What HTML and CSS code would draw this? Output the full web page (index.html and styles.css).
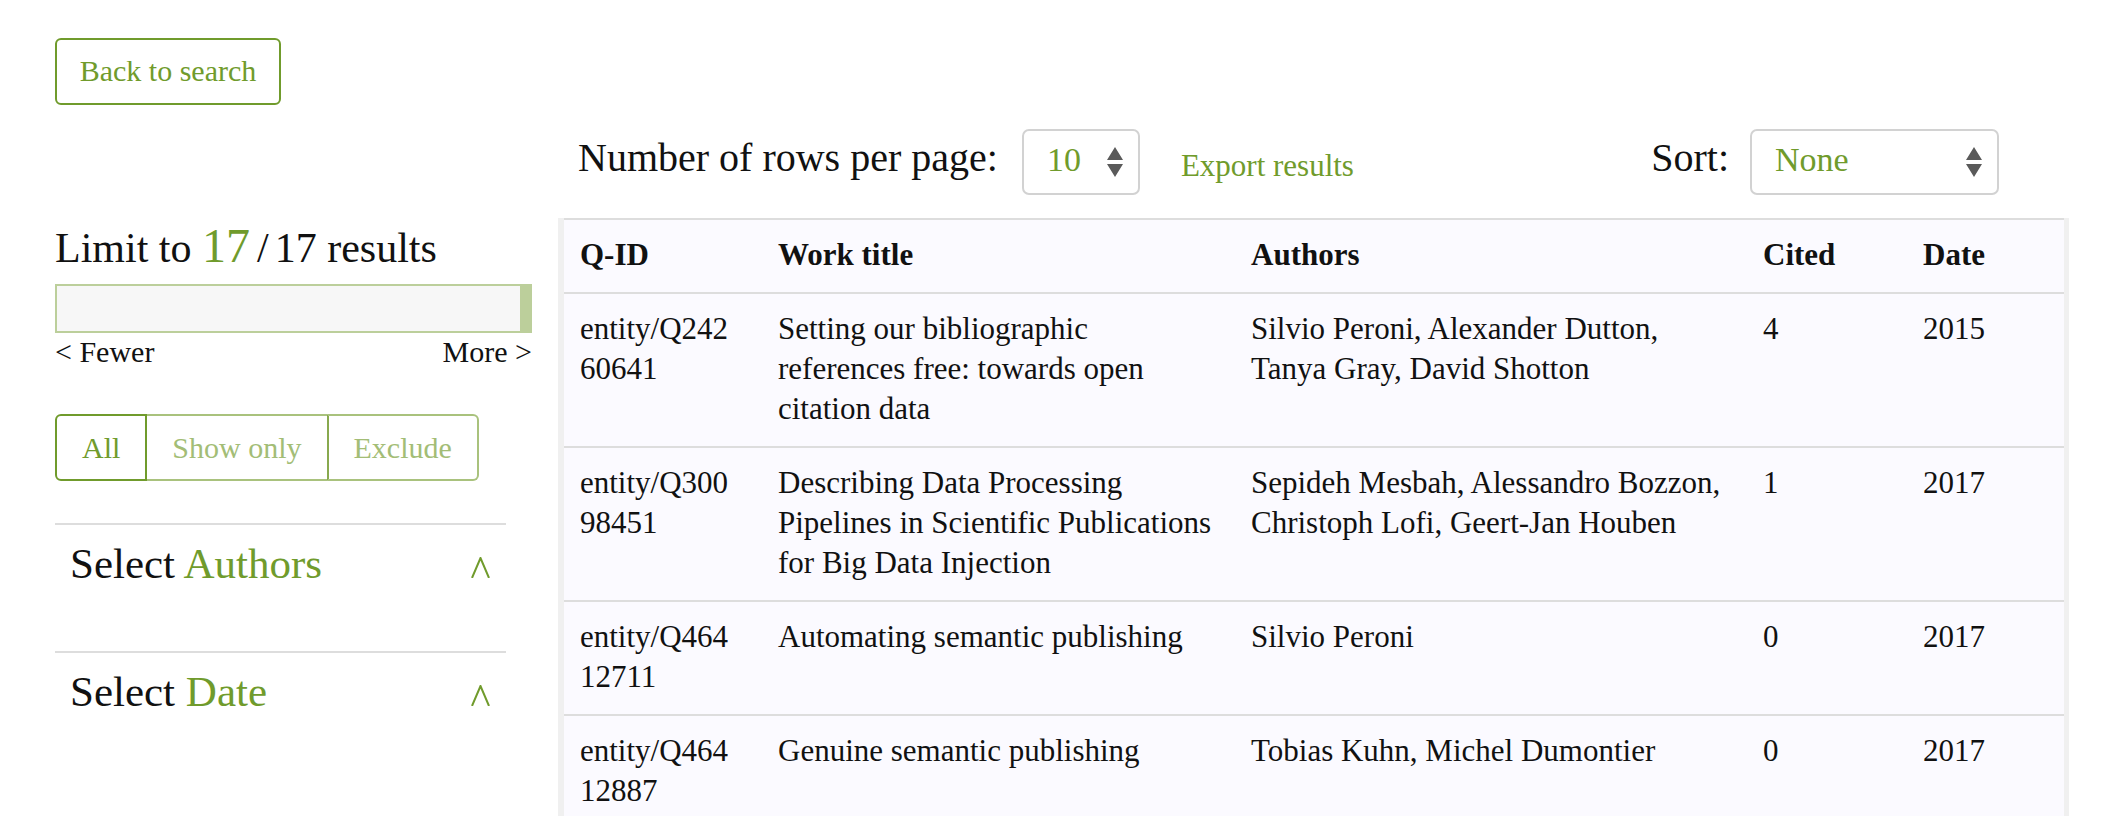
FILE: index.html
```html
<!DOCTYPE html>
<html lang="en">
<head>
<meta charset="utf-8">
<title>Results</title>
<link rel="stylesheet" href="styles.css">
</head>
<body>
<div class="page">
  <a class="back-btn" href="#">Back to search</a>
  <div class="main">
    <aside class="sidebar">
      <div class="limit">Limit to <span class="limit-num">17</span><span class="slash">/</span>17 results</div>
      <div class="slider"><div class="slider-handle"></div></div>
      <div class="slider-labels"><span>&lt; Fewer</span><span>More &gt;</span></div>
      <div class="toggle">
        <span class="seg seg-active">All</span><span class="seg seg-mid">Show only</span><span class="seg seg-last">Exclude</span>
      </div>
      <div class="facet facet-first">
        <h3 class="facet-title">Select <span class="green">Authors</span></h3>
        <svg class="chev" width="19" height="21" viewBox="0 0 19 21"><polyline points="1,21 9.5,1 18,21" fill="none" stroke="#709b2c" stroke-width="2"/></svg>
      </div>
      <div class="facet">
        <h3 class="facet-title">Select <span class="green">Date</span></h3>
        <svg class="chev" width="19" height="21" viewBox="0 0 19 21"><polyline points="1,21 9.5,1 18,21" fill="none" stroke="#709b2c" stroke-width="2"/></svg>
      </div>
    </aside>
    <section class="results">
      <div class="controls">
        <span class="ctl-label rows-label">Number of rows per page:</span>
        <div class="select select-rows">
          <span class="select-value">10</span>
          <svg width="16" height="30" viewBox="0 0 16 30"><path d="M8 0 L16 13 L0 13 Z M0 17 L16 17 L8 30 Z" fill="#5a5a5a"/></svg>
        </div>
        <a class="export" href="#">Export results</a>
        <div class="sort">
          <span class="ctl-label">Sort:</span>
          <div class="select select-sort">
            <span class="select-value">None</span>
            <svg width="16" height="30" viewBox="0 0 16 30"><path d="M8 0 L16 13 L0 13 Z M0 17 L16 17 L8 30 Z" fill="#5a5a5a"/></svg>
          </div>
        </div>
      </div>
      <div class="table-wrap">
        <table class="results-table">
          <colgroup>
            <col class="c-qid"><col class="c-title"><col class="c-authors"><col class="c-cited"><col class="c-date">
          </colgroup>
          <thead>
            <tr><th>Q-ID</th><th>Work title</th><th>Authors</th><th>Cited</th><th>Date</th></tr>
          </thead>
          <tbody>
            <tr>
              <td class="qid">entity/Q24260641</td>
              <td>Setting our bibliographic references free: towards open citation data</td>
              <td>Silvio Peroni, Alexander Dutton, Tanya Gray, David Shotton</td>
              <td>4</td>
              <td>2015</td>
            </tr>
            <tr>
              <td class="qid">entity/Q30098451</td>
              <td>Describing Data Processing Pipelines in Scientific Publications for Big Data Injection</td>
              <td>Sepideh Mesbah, Alessandro Bozzon, Christoph Lofi, Geert-Jan Houben</td>
              <td>1</td>
              <td>2017</td>
            </tr>
            <tr>
              <td class="qid">entity/Q46412711</td>
              <td>Automating semantic publishing</td>
              <td>Silvio Peroni</td>
              <td>0</td>
              <td>2017</td>
            </tr>
            <tr>
              <td class="qid">entity/Q46412887</td>
              <td>Genuine semantic publishing</td>
              <td>Tobias Kuhn, Michel Dumontier</td>
              <td>0</td>
              <td>2017</td>
            </tr>
          </tbody>
        </table>
      </div>
    </section>
  </div>
</div>
</body>
</html>
```

FILE: styles.css
```css
html, body {
  margin: 0;
  padding: 0;
  overflow: hidden;
  background: #ffffff;
}
body {
  font-family: "Liberation Serif", "Times New Roman", serif;
  color: #111111;
}
.page {
  padding: 38px 0 0 55px;
}
.back-btn {
  display: inline-flex;
  align-items: center;
  justify-content: center;
  box-sizing: border-box;
  width: 226px;
  height: 67px;
  padding-bottom: 2px;
  border: 2px solid #709b2c;
  border-radius: 6px;
  color: #709b2c;
  font-size: 30px;
  text-decoration: none;
}
.main {
  display: flex;
  gap: 26px;
  margin-top: 24px;
}
.sidebar {
  flex: none;
  width: 477px;
  padding-top: 92px;
}
.limit {
  font-size: 42px;
  line-height: 50px;
}
.limit-num {
  font-size: 48px;
  color: #709b2c;
}
.slash {
  padding: 0 6px 0 7px;
}
.slider {
  display: flex;
  justify-content: flex-end;
  box-sizing: border-box;
  height: 49px;
  margin-top: 11px;
  border: 2px solid #bccf9b;
  background: #f7f7f7;
}
.slider-handle {
  width: 10px;
  background: #bccf9b;
}
.slider-labels {
  display: flex;
  justify-content: space-between;
  font-size: 30px;
  line-height: 38px;
}
.toggle {
  display: inline-flex;
  margin-top: 43px;
  font-size: 30px;
  line-height: 63px;
}
.seg {
  padding: 0 25px;
  border: 2px solid #a9c27d;
  color: #a3bd76;
}
.seg-active {
  border-color: #709b2c;
  color: #709b2c;
  border-radius: 6px 0 0 6px;
}
.seg-mid {
  border-left: none;
  border-right: none;
}
.seg-last {
  border-left-color: #88a94f;
  border-radius: 0 6px 6px 0;
}
.facet {
  display: flex;
  justify-content: space-between;
  align-items: baseline;
  box-sizing: border-box;
  width: 451px;
  border-top: 2px solid #dddddd;
  padding: 14px 16px 62px 15px;
}
.facet-first {
  margin-top: 42px;
}
.facet-title {
  margin: 0;
  font-size: 43px;
  line-height: 50px;
  font-weight: normal;
}
.green {
  color: #709b2c;
}
.results {
  flex: none;
  width: 1511px;
}
.controls {
  display: flex;
  align-items: baseline;
  height: 66px;
  padding: 0 70px 0 20px;
  margin-bottom: 23px;
}
.ctl-label {
  font-size: 40px;
  line-height: 46px;
}
.rows-label {
  margin-right: 24px;
}
.select {
  display: flex;
  justify-content: space-between;
  align-items: flex-start;
  box-sizing: border-box;
  height: 66px;
  padding: 0 15px 0 23px;
  border: 2px solid #d2d2d2;
  border-radius: 7px;
  background: #ffffff;
}
.select svg {
  align-self: center;
}
.select-value {
  margin-top: 9px;
  font-size: 34px;
  line-height: 40px;
  color: #709b2c;
}
.select-rows {
  width: 118px;
  margin-right: 41px;
}
.select-sort {
  width: 249px;
}
.export {
  align-self: center;
  padding-top: 8px;
  font-size: 31px;
  line-height: 36px;
  color: #709b2c;
  text-decoration: none;
}
.sort {
  display: flex;
  align-items: baseline;
  gap: 21px;
  margin-left: auto;
}
.table-wrap {
  border-left: 6px solid #f0f0f0;
  border-right: 5px solid #f0f0f0;
  background: #fbfaff;
  min-height: 700px;
}
.results-table {
  width: 100%;
  table-layout: fixed;
  border-collapse: separate;
  border-spacing: 0;
  font-size: 31px;
  line-height: 40px;
}
.c-qid { width: 198px; }
.c-title { width: 473px; }
.c-authors { width: 512px; }
.c-cited { width: 160px; }
.c-date { width: 157px; }
.results-table th,
.results-table td {
  text-align: left;
  vertical-align: top;
  padding: 15px 16px 17px;
  border-bottom: 2px solid #dddddd;
}
.results-table th {
  border-top: 2px solid #dddddd;
  font-weight: bold;
}
.results-table td.qid {
  padding-right: 27px;
  word-break: break-all;
}
```
